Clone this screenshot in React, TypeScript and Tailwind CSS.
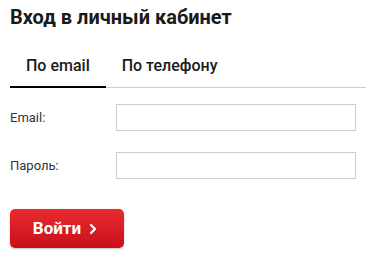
import { ChevronRight } from "lucide-react";

export default function App() {
  return (
    <div className="w-[377px] h-[267px] bg-white pl-[10px] pt-[5px] font-['Roboto',sans-serif] text-[#1a1a1a]">
      <h1 className="text-[20px] leading-[24px] font-bold">Вход в личный кабинет</h1>

      {/* Tabs */}
      <div className="mt-[15px] w-[356px] flex border-b border-[#cfcfcf]">
        <button className="relative px-[16px] pt-[10px] pb-[9px] text-[16px] leading-[24px] font-medium text-[#1a1a1a]">
          По email
          <span className="absolute left-0 right-0 bottom-[-1px] h-[2px] bg-black" />
        </button>
        <button className="px-[16px] pt-[10px] pb-[9px] text-[16px] leading-[24px] font-medium text-[#1a1a1a]">
          По телефону
        </button>
      </div>

      {/* Form */}
      <div className="mt-[16px] flex flex-col gap-[21px]">
        <div className="flex items-center">
          <label className="w-[106px] text-[13px] text-[#333]">Email:</label>
          <input className="w-[240px] h-[27px] border border-[#cccccc] outline-none px-2 text-[13px]" />
        </div>
        <div className="flex items-center">
          <label className="w-[106px] text-[13px] text-[#333]">Пароль:</label>
          <input type="password" className="w-[240px] h-[27px] border border-[#cccccc] outline-none px-2 text-[13px]" />
        </div>
      </div>

      <button className="mt-[30px] w-[114px] h-[39px] rounded-[5px] bg-gradient-to-b from-[#ea2a2f] to-[#c80f19] shadow-[0_1px_2px_rgba(0,0,0,0.25)] flex items-center justify-center gap-[4px] text-white text-[17px] font-bold">
        Войти
        <ChevronRight size={16} strokeWidth={3.5} className="mt-[1px]" />
      </button>
    </div>
  );
}
